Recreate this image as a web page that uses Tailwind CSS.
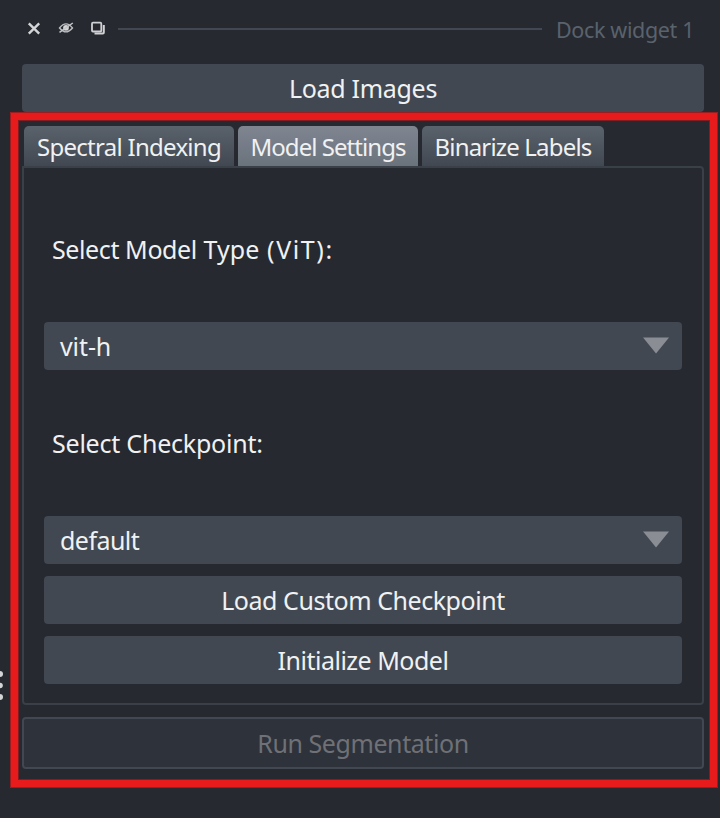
<!DOCTYPE html>
<html lang="en">
<head>
<meta charset="utf-8">
<title>Dock widget 1</title>
<script src="https://cdn.jsdelivr.net/npm/@tailwindcss/browser@4"></script>
</head>
<body class="bg-[#262930]">
<main class="relative flex h-[818px] w-[720px] flex-col overflow-hidden bg-[#262930] px-[22px] font-['Noto_Sans',sans-serif] text-[25px] leading-[30px] text-[#f0f1f2]">
  <header class="flex h-[64px] shrink-0 items-start">
    <svg class="mt-[18px] ml-px h-[22px] w-[64px] shrink-0" viewBox="23 18 64 22" fill="none">
      <path d="M28.8 23.3 39.2 33.6M39.2 23.3 28.8 33.6" stroke="#d4d5d7" stroke-width="2.4"/>
      <path d="M59.5 28Q66 19.8 72.5 28Q66 35.8 59.5 28Z" stroke="#b9bbbd" stroke-width="1.4"/>
      <circle cx="66" cy="27.8" r="2.9" fill="#d4d5d7"/>
      <path d="M59.5 32.4 72.8 23" stroke="#c3c5c7" stroke-width="1.5"/>
    </svg>
    <svg class="mt-[18px] h-[22px] w-[31px] shrink-0" viewBox="87 18 31 22" fill="none" stroke="#d0d1d3">
      <rect x="92" y="22.7" width="9.3" height="8.8" rx="1" stroke-width="1.8"/>
      <path d="M103.8 25V32.5Q103.8 33.5 102.8 33.5H94.5" stroke-width="2"/>
    </svg>
    <div class="mt-[28px] h-[2px] w-[424px] shrink-0 bg-[#414851]"></div>
    <div class="mt-[15px] ml-[14px] text-[21.5px] tracking-[-0.35px] whitespace-nowrap text-[#5a626c]">Dock widget 1</div>
  </header>
  <button class="h-[48px] w-[682px] shrink-0 rounded-[4px] bg-[#414851] pb-px"><span class="tracking-[-0.3px]">Load Images</span></button>
  <nav class="mt-[14px] flex h-[40px] shrink-0 gap-[4px] pl-[2px] text-[24px]">
    <div class="w-[210px] rounded-t-[5px] bg-linear-to-b from-[#5a626c] to-[#414851] pt-[6px] text-center whitespace-nowrap"><span class="tracking-[-0.72px]">Spectral Indexing</span></div>
    <div class="w-[180px] rounded-t-[5px] bg-linear-to-b from-[#808590] to-[#6a737d] pt-[6px] text-center whitespace-nowrap"><span class="tracking-[-0.95px]">Model Settings</span></div>
    <div class="w-[182px] rounded-t-[5px] bg-linear-to-b from-[#5a626c] to-[#414851] pt-[6px] text-center whitespace-nowrap"><span class="tracking-[-0.82px]">Binarize Labels</span></div>
  </nav>
  <section class="flex h-[539px] w-[682px] shrink-0 flex-col rounded-b-[4px] rounded-tr-[4px] border-2 border-[#3a4048] px-[20px]">
    <div class="mt-[66px] h-[30px] pl-[8px]"><span class="tracking-[-0.4px]">Select Model</span><span class="tracking-[0.1px]"> Type </span><span class="ml-px tracking-[1.6px]">(ViT):</span></div>
    <div class="mt-[58px] flex h-[48px] shrink-0 items-center justify-between rounded-[4px] bg-[#414851] pr-[13px] pl-[16px]">
      <span class="tracking-[-0.1px]">vit-h</span>
      <svg class="mb-px h-[17px] w-[26px]" viewBox="0 0 26 17"><path d="M0 .5H26L13 16.5Z" fill="#8b8d95"/></svg>
    </div>
    <div class="mt-[58px] h-[30px] pl-[8px]"><span class="tracking-[-0.22px]">Select Checkpoint:</span></div>
    <div class="mt-[58px] flex h-[48px] shrink-0 items-center justify-between rounded-[4px] bg-[#414851] pr-[13px] pl-[16px]">
      <span class="tracking-[-0.55px]">default</span>
      <svg class="mb-px h-[17px] w-[26px]" viewBox="0 0 26 17"><path d="M0 .5H26L13 16.5Z" fill="#8b8d95"/></svg>
    </div>
    <button class="mt-[12px] h-[48px] shrink-0 rounded-[4px] bg-[#414851]"><span class="tracking-[-0.45px]">Load Custom Checkpoint</span></button>
    <button class="mt-[12px] h-[48px] shrink-0 rounded-[4px] bg-[#414851]"><span class="tracking-[-0.5px]">Initialize Model</span></button>
  </section>
  <button class="mt-[12px] h-[52px] w-[682px] shrink-0 rounded-[4px] border-2 border-[#414851] bg-[#2e323a] text-[#6f7176]"><span class="tracking-[-0.42px]">Run Segmentation</span></button>
  <div class="pointer-events-none absolute top-[112px] left-[10px] h-[676px] w-[708px] border border-[#9c1c20]"><div class="h-full w-full border-[7px] border-[#e71b1b]"><div class="h-full w-full border border-[#7a2024]"></div></div></div>
  <svg class="absolute top-[668px] left-0 h-[34px] w-[5px]" viewBox="0 668 5 34" fill="#d4d5d7"><circle cx="0" cy="674" r="3"/><circle cx="0" cy="685.5" r="2.8"/><circle cx="0" cy="697" r="3"/></svg>
</main>
</body>
</html>
